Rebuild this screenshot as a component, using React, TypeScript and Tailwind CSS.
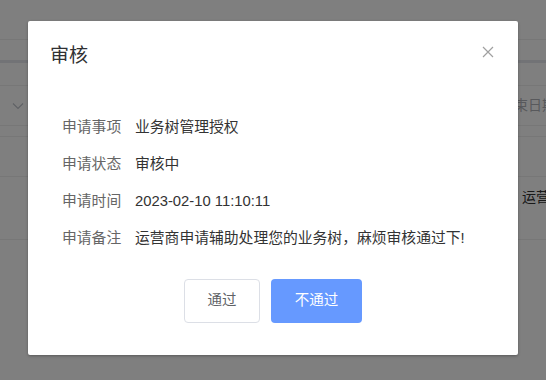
import React from "react";

const font = { fontFamily: '"Liberation Sans", "Noto Sans CJK SC", sans-serif' };

function Background() {
  return (
    <div className="w-[546px] h-[380px] bg-white overflow-hidden text-[14px] text-[#606266]" style={font}>
      <div className="h-[40px] border-b border-[#eeeeee]" />
      <div className="h-[20px]" />
      <div className="h-[3px] bg-[#e4e7ed]" />
      <div className="h-[23px] border-b border-[#eeeeee]" />
      <div className="h-[40px] flex items-center justify-between px-[12px] border-b border-[#eeeeee]">
        <svg width="12" height="8" viewBox="0 0 12 8" fill="none">
          <path d="M1 1.5L6 6.5L11 1.5" stroke="#c0c4cc" strokeWidth="1.2" />
        </svg>
        <span className="text-[#b0b3b8] -mr-[22px] whitespace-nowrap">结束日期</span>
      </div>
      <div className="h-[11px] border-b border-[#eeeeee]" />
      <div className="h-[40px] border-b border-[#eeeeee]" />
      <div className="h-[63px] flex items-start justify-end border-b border-[#eeeeee]">
        <span className="text-[#333] -mr-[18px] pt-[10px] whitespace-nowrap">运营商</span>
      </div>
    </div>
  );
}

export default function App() {
  const rows: [string, string][] = [
    ["申请事项", "业务树管理授权"],
    ["申请状态", "审核中"],
    ["申请时间", "2023-02-10 11:10:11"],
    ["申请备注", "运营商申请辅助处理您的业务树，麻烦审核通过下!"],
  ];
  return (
    <div className="relative w-[546px] h-[380px] overflow-hidden" style={font}>
      <Background />
      <div className="absolute inset-0 bg-black/50" />
      <div className="absolute left-[28px] top-[21px] w-[490px] h-[334px] bg-white rounded-[2px] shadow-[0_1px_3px_rgba(0,0,0,0.3)] flex flex-col">
        <div className="flex items-center justify-between pt-[23px] pl-[22px] pr-[24px]">
          <span className="text-[19px] leading-[24px] text-[#303133]">审核</span>
          <svg width="12" height="12" viewBox="0 0 12 12" className="-mt-[8px]">
            <path d="M1 1L11 11M11 1L1 11" stroke="#a0a0a0" strokeWidth="1.2" />
          </svg>
        </div>
        <div className="flex flex-col gap-[17px] pt-[49px] pl-[34px]">
          {rows.map(([k, v]) => (
            <div key={k} className="flex items-center text-[14.8px] leading-[20px]">
              <span className="text-[#666666] w-[73px]">{k}</span>
              <span className="text-[#333333]">{v}</span>
            </div>
          ))}
        </div>
        <div className="flex justify-center gap-[11px] pt-[31px]">
          <button className="h-[44px] w-[76px] rounded-[4px] border border-[#dcdfe6] bg-white text-[14.5px] text-[#606266]">
            通过
          </button>
          <button className="h-[44px] w-[91px] rounded-[4px] bg-[#6699ff] text-[14.5px] text-white">
            不通过
          </button>
        </div>
      </div>
    </div>
  );
}
